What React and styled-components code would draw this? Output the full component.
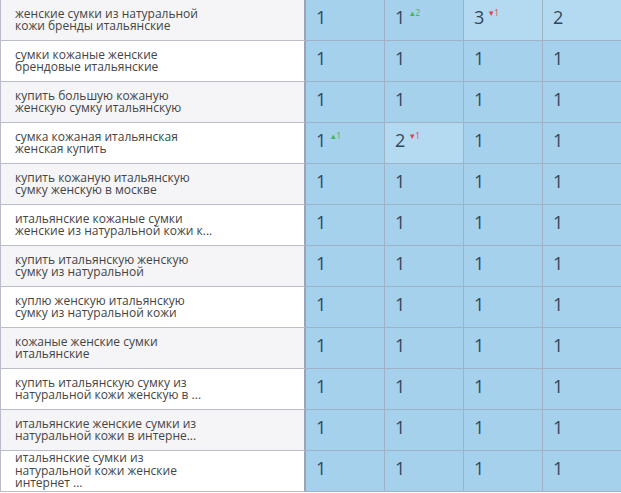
import React from "react";
import styled, { createGlobalStyle } from "styled-components";

const GlobalStyle = createGlobalStyle`
  html, body {
    margin: 0;
    padding: 0;
    background: #ffffff;
    overflow: hidden;
  }
  body {
    font-family: "Open Sans", "Noto Sans", sans-serif;
  }
`;

const rows = [
  { q: "женские сумки из натуральной\nкожи бренды итальянские", p: [{ v: 1 }, { v: 1, d: 2 }, { v: 3, d: -1, hi: true }, { v: 2, hi: true }] },
  { q: "сумки кожаные женские\nбрендовые итальянские", p: [{ v: 1 }, { v: 1 }, { v: 1 }, { v: 1 }] },
  { q: "купить большую кожаную\nженскую сумку итальянскую", p: [{ v: 1 }, { v: 1 }, { v: 1 }, { v: 1 }] },
  { q: "сумка кожаная итальянская\nженская купить", p: [{ v: 1, d: 1 }, { v: 2, d: -1, hi: true }, { v: 1 }, { v: 1 }] },
  { q: "купить кожаную итальянскую\nсумку женскую в москве", p: [{ v: 1 }, { v: 1 }, { v: 1 }, { v: 1 }] },
  { q: "итальянские кожаные сумки\nженские из натуральной кожи к...", p: [{ v: 1 }, { v: 1 }, { v: 1 }, { v: 1 }] },
  { q: "купить итальянскую женскую\nсумку из натуральной", p: [{ v: 1 }, { v: 1 }, { v: 1 }, { v: 1 }] },
  { q: "куплю женскую итальянскую\nсумку из натуральной кожи", p: [{ v: 1 }, { v: 1 }, { v: 1 }, { v: 1 }] },
  { q: "кожаные женские сумки\nитальянские", p: [{ v: 1 }, { v: 1 }, { v: 1 }, { v: 1 }] },
  { q: "купить итальянскую сумку из\nнатуральной кожи женскую в ...", p: [{ v: 1 }, { v: 1 }, { v: 1 }, { v: 1 }] },
  { q: "итальянские женские сумки из\nнатуральной кожи в интерне...", p: [{ v: 1 }, { v: 1 }, { v: 1 }, { v: 1 }] },
  { q: "итальянские сумки из\nнатуральной кожи женские\nинтернет ...", p: [{ v: 1 }, { v: 1 }, { v: 1 }, { v: 1 }] },
];

const Table = styled.div`
  width: 640px;
  display: flex;
  flex-direction: column;
`;

const Row = styled.div`
  display: grid;
  grid-template-columns: 306px 79px 79px 79px 79px;
  height: 41px;
`;

const Query = styled.div`
  box-sizing: border-box;
  height: 41px;
  border-left: 1px solid #b9bccb;
  border-right: 2px solid #9ea3b4;
  border-bottom: 1px solid #b9bccb;
  background: ${(p) => (p.$odd ? "#f5f5f7" : "#ffffff")};
  padding: 0 10px 0 14px;
  display: flex;
  align-items: center;
  white-space: pre-line;
  font-size: 12px;
  line-height: 12.5px;
  color: #444444;
`;

const Pos = styled.div`
  box-sizing: border-box;
  height: 41px;
  border-right: 1px solid #9fb3c6;
  border-bottom: 1px solid #9fb3c6;
  background: ${(p) => (p.$hi ? "#b4daf1" : "#a5d1ec")};
  padding: 5px 0 0 10px;
  display: flex;
  align-items: flex-start;
`;

const Num = styled.span`
  font-size: 18px;
  line-height: 24px;
  color: #33475b;
`;

const Delta = styled.span`
  font-size: 8.5px;
  line-height: 10px;
  margin-left: 5px;
  margin-top: 3px;
  color: ${(p) => (p.$up ? "#47b15a" : "#e2434b")};
`;

function Cell({ v, d, hi }) {
  return (
    <Pos $hi={hi}>
      <Num>{v}</Num>
      {d ? (
        <Delta $up={d > 0}>
          {d > 0 ? "▴" : "▾"}
          {Math.abs(d)}
        </Delta>
      ) : null}
    </Pos>
  );
}

export default function App() {
  return (
    <>
      <GlobalStyle />
      <Table>
        {rows.map((r, i) => (
          <Row key={i}>
            <Query $odd={i % 2 === 0}>{r.q}</Query>
            {r.p.map((c, j) => (
              <Cell key={j} {...c} />
            ))}
          </Row>
        ))}
      </Table>
    </>
  );
}
